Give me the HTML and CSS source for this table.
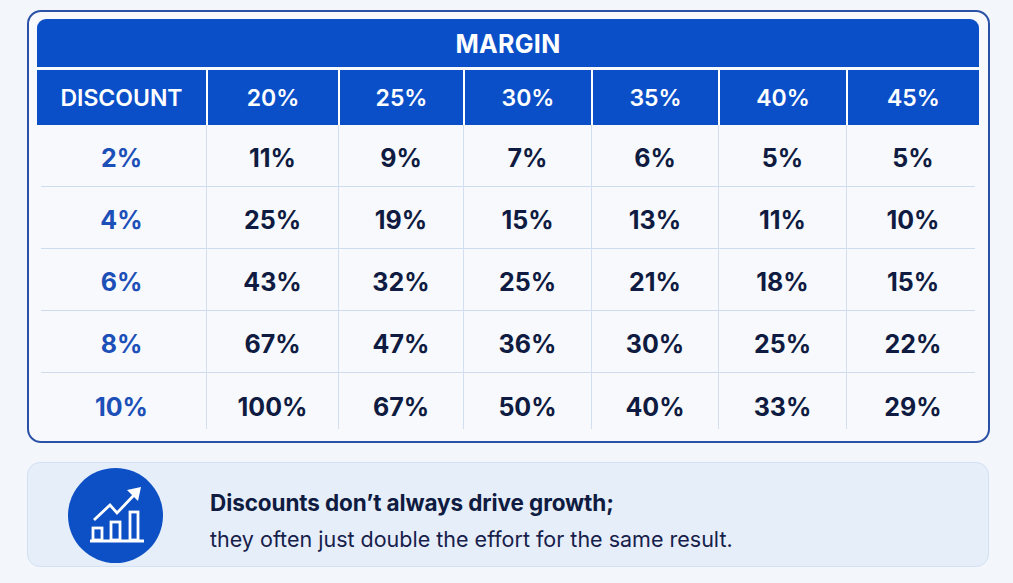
FILE: index.html
```html
<!DOCTYPE html>
<html lang="en">
<head>
<meta charset="utf-8">
<title>Discount vs Margin</title>
<link rel="stylesheet" href="styles.css">
</head>
<body>
<main class="page">
  <section class="card">
    <div class="table">
      <div class="band">MARGIN</div>
      <div class="row head">
        <div class="cell">DISCOUNT</div>
        <div class="cell">20%</div>
        <div class="cell">25%</div>
        <div class="cell">30%</div>
        <div class="cell">35%</div>
        <div class="cell">40%</div>
        <div class="cell">45%</div>
      </div>
      <div class="row body">
        <div class="cell key">2%</div>
        <div class="cell">11%</div><div class="cell">9%</div><div class="cell">7%</div><div class="cell">6%</div><div class="cell">5%</div><div class="cell">5%</div>
      </div>
      <div class="row body">
        <div class="cell key">4%</div>
        <div class="cell">25%</div><div class="cell">19%</div><div class="cell">15%</div><div class="cell">13%</div><div class="cell">11%</div><div class="cell">10%</div>
      </div>
      <div class="row body">
        <div class="cell key">6%</div>
        <div class="cell">43%</div><div class="cell">32%</div><div class="cell">25%</div><div class="cell">21%</div><div class="cell">18%</div><div class="cell">15%</div>
      </div>
      <div class="row body">
        <div class="cell key">8%</div>
        <div class="cell">67%</div><div class="cell">47%</div><div class="cell">36%</div><div class="cell">30%</div><div class="cell">25%</div><div class="cell">22%</div>
      </div>
      <div class="row body last">
        <div class="cell key">10%</div>
        <div class="cell">100%</div><div class="cell">67%</div><div class="cell">50%</div><div class="cell">40%</div><div class="cell">33%</div><div class="cell">29%</div>
      </div>
    </div>
  </section>

  <aside class="note">
    <div class="badge">
      <svg viewBox="0 0 95 95" width="95" height="95" aria-hidden="true">
        <g fill="none" stroke="#ffffff" stroke-width="2.8" stroke-linejoin="miter" stroke-linecap="butt">
          <line x1="22" y1="73" x2="76" y2="73"/>
          <rect x="25" y="60" width="9" height="12"/>
          <rect x="43" y="54" width="9" height="18"/>
          <rect x="62" y="44" width="8" height="28"/>
          <polyline points="26,52 42,37 49,45 67,26"/>
        </g>
        <polygon points="73,19 59,22 70,33" fill="#ffffff"/>
      </svg>
    </div>
    <div class="msg">
      <p class="lead">Discounts don’t always drive growth;</p>
      <p class="sub">they often just double the effort for the same result.</p>
    </div>
  </aside>
</main>
</body>
</html>
```

FILE: styles.css
```css
* { box-sizing: border-box; }
html, body { margin: 0; padding: 0; }
body {
  background: #f3f6fb;
  font-family: "Inter", "Roboto", "Liberation Sans", sans-serif;
  color: #0f1b40;
  width: 1013px;
  height: 583px;
  overflow: hidden;
}
.page {
  padding: 10px 23px 0 27px;
  display: flex;
  flex-direction: column;
  gap: 19px;
}
.card {
  width: 963px;
  height: 433px;
  border: 2px solid #2b51a6;
  border-radius: 14px;
  background: #f7f9fd;
  padding: 7px 9px 0 8px;
}
.table {
  width: 942px;
  display: flex;
  flex-direction: column;
}
.band {
  height: 48px;
  background: #0b4fc8;
  border-radius: 9px 9px 0 0;
  color: #ffffff;
  font-weight: 700;
  font-size: 25px;
  display: flex;
  align-items: center;
  justify-content: center;
  letter-spacing: 0.3px;
  margin-bottom: 3px;
  padding-top: 2px;
}
.row {
  display: grid;
  grid-template-columns: 169px 132px 125px 128px 127px 128px 133px;
}
.cell {
  display: flex;
  align-items: center;
  justify-content: center;
}
.head .cell {
  height: 55px;
  background: #0b4fc8;
  color: #ffffff;
  font-weight: 600;
  font-size: 23px;
}
.head .cell + .cell { border-left: 2px solid #ffffff; }
.body {
  height: 62px;
  background-image: linear-gradient(#cddcee, #cddcee);
  background-size: calc(100% - 8px) 1px;
  background-position: center bottom;
  background-repeat: no-repeat;
}
.body.last { background: none; height: 56px; }
.body .cell {
  font-weight: 700;
  font-size: 25px;
  color: #0f1b40;
  padding-top: 3px;
}
.body.last .cell { padding-top: 11px; }
.body .cell + .cell { border-left: 1px solid #d2dfef; }
.body .cell.key { color: #1c4fb7; }

.note {
  width: 962px;
  height: 105px;
  background: #e6eefa;
  border: 1px solid #d2e0f3;
  border-radius: 13px;
  display: flex;
  align-items: center;
  padding-left: 40px;
  gap: 47px;
}
.badge {
  width: 95px;
  height: 95px;
  border-radius: 50%;
  background: #0d4fc4;
  flex: none;
  display: flex;
  margin-top: 2px;
}
.badge svg { display: block; }
.msg { display: flex; flex-direction: column; gap: 6px; padding-top: 12px; }
.msg p { margin: 0; }
.lead {
  font-weight: 700;
  font-size: 22.5px;
  color: #0f1b40;
  line-height: 30px;
  letter-spacing: -0.1px;
}
.sub {
  font-weight: 400;
  font-size: 21.5px;
  color: #16204a;
  line-height: 30px;
}
```
